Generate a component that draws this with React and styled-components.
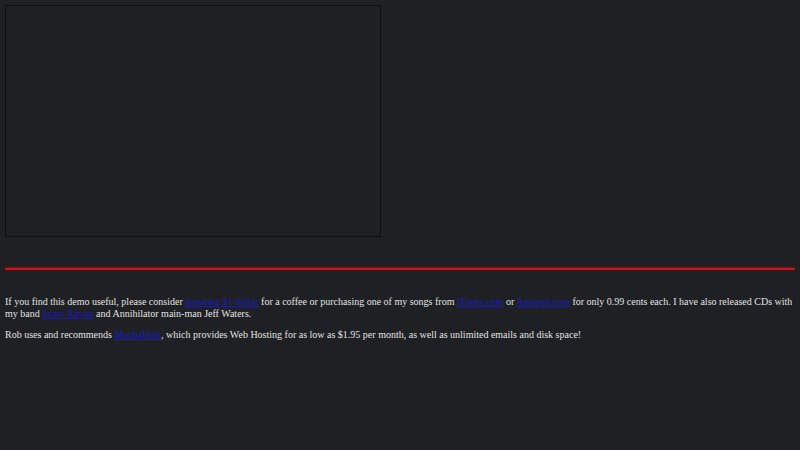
import React from "react";
import styled, { createGlobalStyle } from "styled-components";

const GlobalStyle = createGlobalStyle`
  html, body {
    background: #1f2023;
  }
  body {
    margin: 5px;
    color: #e2e2e2;
    font-family: "Liberation Serif", "Times New Roman", serif;
    font-size: 10px;
    line-height: 11.5px;
  }
`;

const DemoFrame = styled.div`
  width: 374px;
  height: 230px;
  border: 1px solid #0e0e10;
  background: #1f2023;
`;

const Divider = styled.hr`
  margin: 30px 0 0;
  height: 2px;
  border: none;
  border-top: 1px solid #7a0d10;
  background: #d0121a;
`;

const Note = styled.p`
  margin: ${(p) => p.$top || "10px"} 0 0;
`;

const Link = styled.a`
  color: #1a1ac4;
  text-decoration: underline;
`;

const App = () => {
  return (
    <>
      <GlobalStyle />
      <DemoFrame />
      <Divider />
      <Note $top="26px">
        If you find this demo useful, please consider{" "}
        <Link href="#">donating $1 dollar</Link> for a coffee or purchasing one
        of my songs from <Link href="#">iTunes.com</Link> or{" "}
        <Link href="#">Amazon.com</Link> for only 0.99 cents each. I have also
        released CDs with my band <Link href="#">Scary Rayon</Link> and
        Annihilator main-man Jeff Waters.
      </Note>
      <Note>
        Rob uses and recommends <Link href="#">MochaHost</Link>, which provides
        Web Hosting for as low as $1.95 per month, as well as unlimited emails
        and disk space!
      </Note>
    </>
  );
};

export default App;
